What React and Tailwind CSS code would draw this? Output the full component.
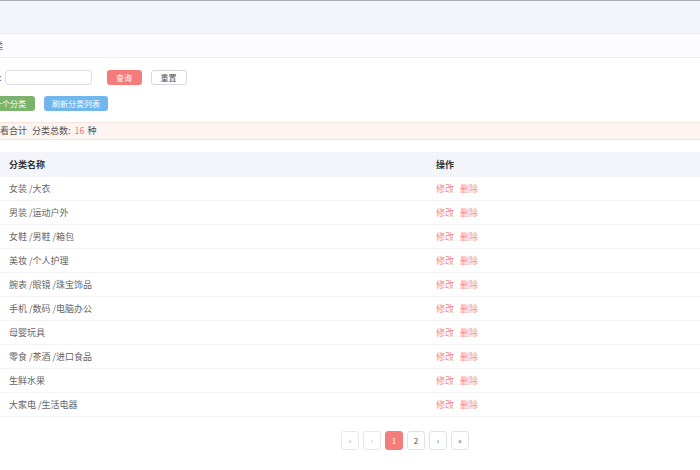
import React from "react";

const rows = [
  "女装 /大衣",
  "男装 /运动户外",
  "女鞋 /男鞋 /箱包",
  "美妆 /个人护理",
  "腕表 /眼镜 /珠宝饰品",
  "手机 /数码 /电脑办公",
  "母婴玩具",
  "零食 /茶酒 /进口食品",
  "生鲜水果",
  "大家电 /生活电器",
];

const font = { fontFamily: '"Noto Sans CJK SC", "Noto Sans", sans-serif' };

export default function App() {
  return (
    <div
      className="w-[700px] h-[470px] overflow-hidden bg-white text-[9px] text-[#666]"
      style={font}
    >
      {/* top bar */}
      <div className="h-[34px] border-t border-[#a9aab2] border-b border-b-[#eceef4] bg-[#f4f5fa]" />

      {/* breadcrumb */}
      <div className="h-[24px] flex items-center border-b border-[#eeeff3] bg-[#fcfcfe]">
        <span className="-ml-[6px] text-[#555]">类</span>
      </div>

      {/* search */}
      <div className="flex items-center pt-[12px]">
        <span className="-ml-[1px] mr-[3px] text-[#555]">:</span>
        <div className="w-[87px] h-[15px] rounded-[3px] border border-[#dcdfe6] bg-white" />
        <button className="ml-[15px] w-[35px] h-[15px] rounded-[3px] bg-[#f67c7c] text-white text-[8px] leading-none">
          查询
        </button>
        <button className="ml-[9px] w-[36px] h-[15px] rounded-[3px] border border-[#d7d9de] bg-white text-[#555] text-[8px] leading-none">
          重置
        </button>
      </div>

      {/* actions */}
      <div className="flex items-center mt-[11px]">
        <button className="-ml-[31px] h-[15px] px-[9px] rounded-[3px] bg-[#7cb36c] text-white text-[8px] leading-none">
          添加一个分类
        </button>
        <button className="ml-[9px] h-[15px] px-[8px] rounded-[3px] bg-[#72b6ee] text-white text-[8px] leading-none">
          刷新分类列表
        </button>
      </div>

      {/* summary */}
      <div className="mt-[11px] h-[18px] flex items-center border-y border-[#f6e4df] bg-[#fdf4f2] text-[#555]">
        <span className="-ml-[9px]">查看合计</span>
        <span className="ml-[5px]">分类总数:</span>
        <span className="ml-[4px] text-[#f47c7c]">16</span>
        <span className="ml-[3px]">种</span>
      </div>

      {/* table */}
      <div className="mt-[12px]">
        <div className="flex items-center h-[25px] bg-[#f4f5fa] font-bold text-[#333]">
          <div className="w-[436px] pl-[9px]">分类名称</div>
          <div>操作</div>
        </div>
        {rows.map((name) => (
          <div
            key={name}
            className="flex items-center h-[24px] border-b border-[#f2f3f5]"
          >
            <div className="w-[436px] pl-[9px]">{name}</div>
            <div className="flex gap-[6px] text-[#f48a8a]">
              <span>修改</span>
              <span>删除</span>
            </div>
          </div>
        ))}
      </div>

      {/* pagination */}
      <div className="flex gap-[4px] pl-[341px] mt-[14px] text-[8px]">
        {["«", "‹", "1", "2", "›", "»"].map((p, i) => (
          <div
            key={i}
            className={
              "w-[18px] h-[19px] flex items-center justify-center rounded-[3px] border " +
              (p === "1"
                ? "bg-[#f67c7c] border-[#f67c7c] text-white"
                : i < 2
                ? "border-[#e6e7ea] text-[#bbb]"
                : "border-[#e1e2e6] text-[#555]")
            }
          >
            {p}
          </div>
        ))}
      </div>
    </div>
  );
}
